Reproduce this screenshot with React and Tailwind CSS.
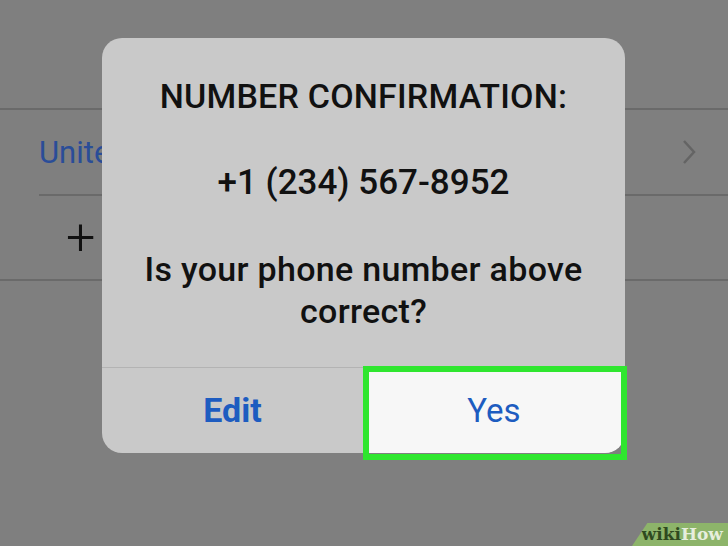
import React from "react";

const App = () => {
  return (
    <main
      className="relative w-[728px] h-[546px] overflow-hidden bg-[#7f7f7f]"
      style={{ fontFamily: "Roboto, 'Liberation Sans', sans-serif" }}
    >
      {/* list behind the alert */}
      <div className="h-[110px] border-b-2 border-[#6a6a6a]" />
      <div className="flex flex-col">
        <div className="ml-[39px] h-[86px] flex items-center justify-between border-b-2 border-[#6a6a6a] pr-[32px]">
          <span className="text-[31px] text-[#2a4d98] leading-none">
            United States
          </span>
          <svg width="14" height="26" viewBox="0 0 14 26" fill="none">
            <path d="M2 2 L12 13 L2 24" stroke="#646464" strokeWidth="2.5" />
          </svg>
        </div>
        <div className="h-[85px] flex items-center pl-[66px] border-b-2 border-[#6a6a6a]">
          <span className="text-[52px] font-light text-[#111] leading-none">+</span>
        </div>
      </div>

      {/* alert */}
      <div className="absolute left-[102px] top-[38px] w-[523px] h-[415px] rounded-[20px] bg-[#c9c9c9] flex flex-col overflow-hidden">
        <div className="flex-1 flex flex-col items-center text-[#111] font-medium text-center">
          <p className="mt-[41px] text-[34px] leading-none tracking-[0.2px]">NUMBER CONFIRMATION:</p>
          <p className="mt-[52px] text-[35px] leading-none">+1 (234) 567-8952</p>
          <p className="mt-[48px] text-[34px] leading-[42px] tracking-[0.3px]">
            Is your phone number above
            <br />
            correct?
          </p>
        </div>
        <div className="h-[86px] flex border-t border-[#b3b3b3]">
          <button className="w-[261px] flex items-center justify-center text-[34px] font-bold text-[#1d5cc0]">
            Edit
          </button>
          <button className="flex-1 flex items-center justify-center bg-[#f7f7f7] text-[33px] text-[#1d5cc0] rounded-br-[20px]">
            Yes
          </button>
        </div>
      </div>

      {/* highlight */}
      <div className="absolute left-[363px] top-[366px] w-[264px] h-[94px] border-[6px] border-[#2fe62f]" />

      {/* watermark */}
      <div className="absolute right-0 bottom-0 w-[96px] h-[23px] bg-[#8db46a] [clip-path:polygon(16%_0,100%_0,100%_100%,0_100%)] flex items-center justify-end pr-[5px]">
        <span
          className="text-[17px] font-bold leading-none"
          style={{ fontFamily: "'DejaVu Serif', serif" }}
        >
          <span className="text-[#2f4a1f]">wiki</span>
          <span className="text-[#e6eedd]">How</span>
        </span>
      </div>
    </main>
  );
};

export default App;
